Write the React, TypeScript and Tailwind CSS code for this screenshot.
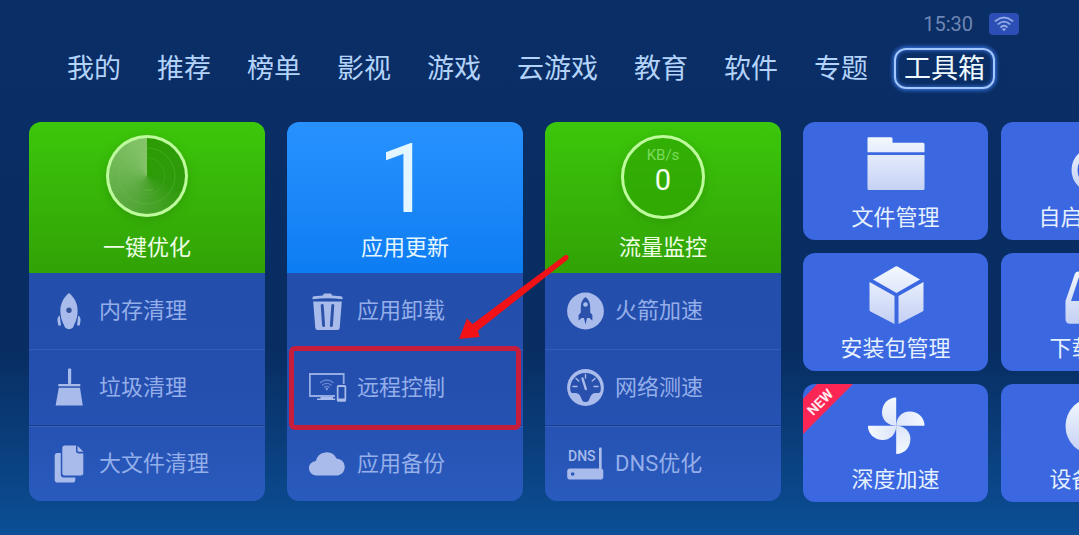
import { useState } from 'react';
import type { ReactNode } from 'react';
import clsx from 'clsx';

const tabs = ['我的', '推荐', '榜单', '影视', '游戏', '云游戏', '教育', '软件', '专题', '工具箱'];

interface Action {
  label: string;
  icon: ReactNode;
}

interface PanelProps {
  title: string;
  tone: 'green' | 'blue';
  hero: ReactNode;
  actions: Action[];
  selected?: string;
}

interface TileProps {
  label: string;
  icon: ReactNode;
  isNew?: boolean;
}

function RowIcon({ children }: { children: ReactNode }) {
  return (
    <svg viewBox="0 0 40 40" className="h-10 w-10 shrink-0" fill="#a9bbea" aria-hidden="true">
      {children}
    </svg>
  );
}

function TileIcon({ children }: { children: ReactNode }) {
  return (
    <svg viewBox="0 0 60 60" className="h-15 w-15 shrink-0" fill="url(#tile-shade)" aria-hidden="true">
      {children}
    </svg>
  );
}

const rocketIcon = (
  <RowIcon>
    <path d="M20 2C25.500 6.500 28.800 13 28.600 20c0 5-1.200 9-3 13H14.400c-1.800-4-3-8-3-13C11.200 13 14.500 6.500 20 2z" />
    <path d="M14.500 33h11l-1.500 3.500q-4 3.500-8 0z" />
    <path d="M10.800 24.500c-2 1.200-2.500 3-2.300 5.500l.8 4.500h2.700zM29.200 24.500c2 1.200 2.500 3 2.300 5.500l-.8 4.500H28z" />
    <circle cx="20" cy="19.300" r="2.700" fill="#35539b" />
  </RowIcon>
);

const broomIcon = (
  <RowIcon>
    <rect x="19" y="0.500" width="3.200" height="15.500" rx="0.800" />
    <rect x="9.300" y="16" width="22" height="2.300" />
    <path d="M9.800 19.800h21.200l2.800 17.700H6.600z" />
  </RowIcon>
);

const filesIcon = (
  <RowIcon>
    <path d="M8 9h3.800v21.500q0 3 3 3h11.500v2.300q0 2.800-2.800 2.800H8.500q-2.800 0-2.800-2.800V11.500Q5.700 9 8 9z" />
    <path d="M15.800 1.500h11.200v5q0 3 3 3h4.300V29q0 2.500-2.500 2.500h-16q-2.500 0-2.500-2.500V4q0-2.500 2.500-2.500z" />
    <path d="M28.500 1.800l5.800 6h-4.300q-1.500 0-1.500-1.500z" />
  </RowIcon>
);

const trashIcon = (
  <RowIcon>
    <path d="M5.500 6.500q0-1 1.500-1.300l9-.8q.3-1.800 1.500-1.800h6q1.200 0 1.500 1.800l9 .8q1.500.300 1.500 1.300v1.700q-15-2-30 0z" />
    <path d="M6.200 10.500h28.600L32.700 37q-.2 2-2.200 2h-20q-2 0-2.200-2z" />
    <path d="M15.200 14.500l1.400 20M25.800 14.500l-1.400 20" stroke="#2c52aa" strokeWidth="3" strokeLinecap="round" />
  </RowIcon>
);

const remoteIcon = (
  <RowIcon>
    <path d="M28 28H2.900V6h33.800v10" fill="none" stroke="#94abe4" strokeWidth="1.800" />
    <path d="M13.500 29h12.500v1.500h2.200V32H10v-1.500h3.500z" />
    <path
      fillRule="evenodd"
      d="M31.500 17h6q1.700 0 1.700 1.700v13.500q0 1.600-1.700 1.600h-6q-1.700 0-1.700-1.600V18.700Q29.800 17 31.500 17zm0 2v11.500h6V19z"
    />
    <g fill="none" stroke="#6886cf" strokeWidth="1.400" strokeLinecap="round">
      <path d="M13.500 14.500q6.300-5 12.600 0M15.500 17q4.300-3.300 8.600 0M17.500 19.300q2.300-1.800 4.600 0" />
    </g>
    <circle cx="19.800" cy="21" r="1.200" fill="#7e99da" />
  </RowIcon>
);

const cloudIcon = (
  <RowIcon>
    <path d="M9.500 31.500a7.300 7.300 0 0 1-.6-14.600A11 11 0 0 1 29.500 14.500 8.600 8.600 0 0 1 31 31.500z" />
  </RowIcon>
);

const boostIcon = (
  <RowIcon>
    <circle cx="20.500" cy="20" r="18.400" />
    <path
      fill="#2b51ab"
      d="M20.500 6c3.300 2.500 4.700 6 4.700 10v5.500l2.200 2.500v5.500l-3-2.500h-2.300l-.6 2.300-1 4.200-1-4.200-.6-2.300h-2.300l-3 2.500V24l2.200-2.500V16c0-4 1.400-7.500 4.700-10z"
    />
    <circle cx="20.500" cy="13.500" r="2.300" />
  </RowIcon>
);

const gaugeIcon = (
  <RowIcon>
    <circle cx="20.500" cy="19.500" r="18.400" />
    <path
      fill="#2850ac"
      d="M5.300 22A15.300 15.300 0 1 1 35.700 22q-.3 3-1.700 3h-3.500q-3.500 0-5 3.500l-1.800 4q-.7 1.500-3.200 1.500t-3.200-1.500l-1.800-4q-1.500-3.500-5-3.500H7q-1.400 0-1.700-3z"
    />
    <g stroke="#a9bbea" strokeWidth="1.400" strokeLinecap="round">
      <path d="M8 18.500h4M33 18.500h-4M11 10.500l2.800 2.500M30 10.500l-2.800 2.500M20.500 6.500v3.500" />
      <path d="M17.500 10.500l3.300 10.500" strokeWidth="2.400" />
    </g>
  </RowIcon>
);

const dnsIcon = (
  <RowIcon>
    <text x="3" y="17" className="font-[Roboto,sans-serif] text-[14px] font-medium">
      DNS
    </text>
    <rect x="34" y="3.500" width="2.700" height="22" rx="0.800" />
    <path fillRule="evenodd" d="M5 24.500h30.500q2.800 0 2.800 2.800v5.400q0 2.800-2.800 2.800H5q-2.800 0-2.800-2.800v-5.400q0-2.800 2.800-2.800zm2.700 3.700a1.800 1.800 0 1 0 0 3.600 1.800 1.800 0 1 0 0-3.600z" />
  </RowIcon>
);

const folderIcon = (
  <TileIcon>
    <path d="M2.500 3.300h22.500q1.500 0 1.500 1.500v4h30.500q1.500 0 1.500 1.500v8H1.500V4.300q0-1 1-1z" />
    <path d="M1.500 21h57v33.500q0 1.500-1.500 1.500H3q-1.500 0-1.500-1.500z" />
  </TileIcon>
);

const packageIcon = (
  <TileIcon>
    <path d="M29.500 1.500q1-.6 2 0l22.500 13-23.500 13.400L7 14.500z" />
    <path d="M3.500 17l25 14v28L4.500 46.500q-1-.5-1-1.500zM57.500 17l-25 14v28l24-12.500q1-.5 1-1.500z" />
  </TileIcon>
);

const fanIcon = (
  <TileIcon>
    {[0, 90, 180, 270].map((deg) => (
      <path key={deg} d="M30.200 29.800V1.500C22 1.500 16 8 16 16.500c0 7.500 6 13.300 14.200 13.300z" transform={`rotate(${deg} 30.200 29.800)`} />
    ))}
  </TileIcon>
);

const powerIcon = (
  <TileIcon>
    <circle cx="30" cy="36" r="19.500" fill="none" stroke="url(#tile-shade)" strokeWidth="6" />
    <rect x="27" y="8" width="6" height="24" rx="3" />
  </TileIcon>
);

const downloadIcon = (
  <TileIcon>
    <path
      fillRule="evenodd"
      d="M14 6.500h32q2.500 0 3.200 2.500l9.300 27v18q0 4.700-4.700 4.700H6.200q-4.700 0-4.700-4.700V36l9.300-27q.7-2.500 3.200-2.500zm1.500 4L7 36h13l3 6h14l3-6h13l-8.500-25.500z"
    />
  </TileIcon>
);

const deviceIcon = (
  <TileIcon>
    <circle cx="30" cy="30" r="28.500" />
    <path d="M30 15v4M30 25v20" stroke="#3b68e2" strokeWidth="5" />
  </TileIcon>
);

function RadarHero() {
  return (
    <div className="h-[82px] w-[82px] rounded-full bg-[#bdfb9c] p-[3px] shadow-[0_3px_8px_#2a8a0888]">
      <div className="h-full w-full rounded-full bg-[conic-gradient(#2c9c04_0deg,#2f9a0c_110deg,#57a83c_210deg,#86c46c_360deg)]">
        <svg viewBox="0 0 76 76" className="h-full w-full" fill="none" stroke="#6fc44e" aria-hidden="true">
          <circle cx="38" cy="38" r="28" strokeOpacity="0.3" />
          <circle cx="38" cy="38" r="18" strokeOpacity="0.2" />
          <path d="M36 52h8" strokeOpacity="0.6" />
        </svg>
      </div>
    </div>
  );
}

function SpeedHero() {
  return (
    <div className="flex h-21 w-21 flex-col items-center rounded-full border-3 border-[#bdfb9c] bg-[#2fa703]/70 pt-[7px] shadow-[0_3px_8px_#2a8a0888]">
      <span className="text-[15px] leading-5 text-[#7ddb5a]">KB/s</span>
      <span className="text-[29px] leading-[30px] text-[#f2ffec]">0</span>
    </div>
  );
}

// Pointer that leads to the highlighted row
function Pointer() {
  return (
    <svg
      viewBox="0 0 112 88"
      className="pointer-events-none absolute -top-24 left-[171px] h-22 w-28"
      fill="#f01216"
      aria-hidden="true"
    >
      <path d="M1 85L9 64.500l5.500 5.500L107 1.200q2.500-1.200 3.500 1.300.500 2-1.300 3.500L20 76.500l1.500 6.500z" />
    </svg>
  );
}

function Panel({ title, tone, hero, actions, selected }: PanelProps) {
  return (
    <section className={clsx('flex w-[236px] shrink-0 flex-col', selected && 'z-10')}>
      <button
        type="button"
        className={clsx(
          'flex h-[151px] flex-col items-center rounded-t-xl bg-linear-to-b pt-[13px]',
          tone === 'green' ? 'from-[#3cc70b] to-[#32a206] text-[#eeffe4]' : 'from-[#2791ff] to-[#0c7df2] text-[#e4f6ff]',
        )}
      >
        <span className="flex h-[98px] items-start justify-center">{hero}</span>
        <span className="text-[22px] leading-[30px]">{title}</span>
      </button>
      <ul className="rounded-b-xl bg-linear-to-b from-[#244eab] via-[#244fae] to-[#295abd]">
        {actions.map(({ label, icon }, i) => (
          <li
            key={label}
            className={clsx(
              'relative h-19',
              i === 1 && 'border-t border-[#345db8]',
              i === 2 && 'border-t border-[#163f8c] shadow-[inset_0_1px_#3561bf]',
              selected === label && 'z-10',
            )}
          >
            <button type="button" className="flex h-full w-full items-center gap-[10px] pl-5 text-[#94aeea]">
              {icon}
              <span className="text-[22px] leading-[30px]">{label}</span>
            </button>
            {selected === label && (
              <>
                <div className="pointer-events-none absolute inset-x-[2px] -top-1 -bottom-[5px] rounded-md border-5 border-[#c71d3c]" />
                <Pointer />
              </>
            )}
          </li>
        ))}
      </ul>
    </section>
  );
}

function Tile({ label, icon, isNew }: TileProps) {
  return (
    <button
      type="button"
      className="relative flex h-[118px] w-[185px] flex-col items-center gap-[9px] overflow-hidden rounded-xl bg-[#3b67e1] pt-3 text-[#e6f1ff]"
    >
      {icon}
      <span className="text-[22px] leading-[30px] whitespace-nowrap">{label}</span>
      {isNew && (
        <svg viewBox="0 0 50 50" className="absolute top-0 left-0 h-[50px] w-[50px]" aria-hidden="true">
          <path d="M14 0h36L0 50V15z" fill="#fb2653" />
          <text
            x="17"
            y="23"
            textAnchor="middle"
            transform="rotate(-45 17 18)"
            fill="#ffe9ee"
            className="font-[Roboto,sans-serif] text-[14px] font-bold"
          >
            NEW
          </text>
        </svg>
      )}
    </button>
  );
}

const panels: PanelProps[] = [
  {
    title: '一键优化',
    tone: 'green',
    hero: <RadarHero />,
    actions: [
      { label: '内存清理', icon: rocketIcon },
      { label: '垃圾清理', icon: broomIcon },
      { label: '大文件清理', icon: filesIcon },
    ],
  },
  {
    title: '应用更新',
    tone: 'blue',
    hero: <span className="text-[96px] leading-[88px]">1</span>,
    selected: '远程控制',
    actions: [
      { label: '应用卸载', icon: trashIcon },
      { label: '远程控制', icon: remoteIcon },
      { label: '应用备份', icon: cloudIcon },
    ],
  },
  {
    title: '流量监控',
    tone: 'green',
    hero: <SpeedHero />,
    actions: [
      { label: '火箭加速', icon: boostIcon },
      { label: '网络测速', icon: gaugeIcon },
      { label: 'DNS优化', icon: dnsIcon },
    ],
  },
];

const tiles: TileProps[] = [
  { label: '文件管理', icon: folderIcon },
  { label: '安装包管理', icon: packageIcon },
  { label: '深度加速', icon: fanIcon, isNew: true },
  { label: '自启动管理', icon: powerIcon },
  { label: '下载管理', icon: downloadIcon },
  { label: '设备信息', icon: deviceIcon },
];

export default function App() {
  const [active, setActive] = useState('工具箱');

  return (
    <div className="min-h-screen w-full overflow-hidden bg-linear-to-b from-[#0a2e66] via-[#082d61] via-65% to-[#0b4f96] pb-8 font-[Roboto,'Noto_Sans_CJK_SC',sans-serif]">
      <svg className="absolute h-0 w-0" aria-hidden="true">
        <defs>
          <linearGradient id="tile-shade" gradientUnits="userSpaceOnUse" x1="0" y1="0" x2="0" y2="60">
            <stop offset="0" stopColor="#f5faff" />
            <stop offset="1" stopColor="#c3cff4" />
          </linearGradient>
        </defs>
      </svg>

      <header>
        <div className="flex items-center justify-end gap-4 pt-[13px] pr-15">
          <time className="text-xl leading-[22px] text-[#6f86b4]">15:30</time>
          <span className="flex h-[22px] w-[30px] items-center justify-center rounded-sm bg-[#2b4fb4]">
            <svg viewBox="0 0 20 16" className="h-4 w-5" fill="none" stroke="#91a9e6" strokeWidth="1.700" strokeLinecap="round" aria-label="Wi-Fi">
              <path d="M1.500 5q8.500-7 17 0M4.300 8q5.700-4.700 11.400 0M7 11q3-2.500 6 0" />
              <path d="M8.300 13l1.700 2 1.700-2q-1.700-1-3.400 0z" fill="#91a9e6" strokeWidth="0.500" />
            </svg>
          </span>
        </div>
        <nav className="mt-[13px] flex gap-4 pl-[57px]">
          {tabs.map((tab) => (
            <button
              key={tab}
              type="button"
              onClick={() => setActive(tab)}
              className={clsx(
                'h-[41px] shrink-0 rounded-xl border-2 px-2 text-[27px] leading-9 whitespace-nowrap',
                active === tab
                  ? 'border-[#a3c8ff] text-[#eefaff] shadow-[0_0_4px_1px_#3f7df0,inset_0_0_4px_#3f7df0]'
                  : 'border-transparent text-[#b3d3fa]',
              )}
            >
              {tab}
            </button>
          ))}
        </nav>
      </header>

      <main className="mt-[33px] flex gap-[22px] pl-[29px]">
        {panels.map((panel) => (
          <Panel key={panel.title} {...panel} />
        ))}
        <div className="grid shrink-0 grid-flow-col grid-rows-3 content-start gap-[13px]">
          {tiles.map((tile) => (
            <Tile key={tile.label} {...tile} />
          ))}
        </div>
      </main>
    </div>
  );
}
